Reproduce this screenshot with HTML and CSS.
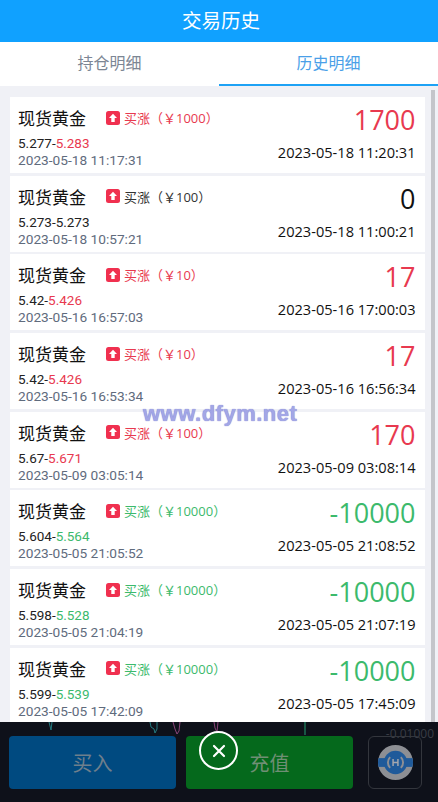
FILE: index.html
```html
<!DOCTYPE html>
<html lang="zh">
<head>
<meta charset="utf-8">
<title>交易历史</title>
<link rel="stylesheet" href="styles.css">
</head>
<body>
<svg class="defs" width="0" height="0"><defs>
<symbol id="up" viewBox="0 0 14 14"><rect width="14" height="14" rx="2.5" fill="#f0304f"/><path d="M7 2.8 11 7H8.7v4H5.3V7H3z" fill="#fff"/></symbol>
<clipPath id="disc"><circle cx="19" cy="19" r="18"/></clipPath>
</defs></svg>
<header class="title">交易历史</header>
<nav class="tabs"><div class="tab">持仓明细</div><div class="tab active">历史明细</div></nav>
<main class="content">
<section class="list">
<article class="card"><div class="left"><div class="head"><span class="name">现货黄金</span><svg class="arrow"><use href="#up"/></svg><span class="type red">买涨（￥1000）</span></div><div class="price">5.277-<span class="red">5.283</span></div><div class="time">2023-05-18 11:17:31</div></div><div class="right"><div class="amount red">1700</div><div class="close">2023-05-18 11:20:31</div></div></article>
<article class="card"><div class="left"><div class="head"><span class="name">现货黄金</span><svg class="arrow"><use href="#up"/></svg><span class="type">买涨（￥100）</span></div><div class="price">5.273-<span>5.273</span></div><div class="time">2023-05-18 10:57:21</div></div><div class="right"><div class="amount">0</div><div class="close">2023-05-18 11:00:21</div></div></article>
<article class="card"><div class="left"><div class="head"><span class="name">现货黄金</span><svg class="arrow"><use href="#up"/></svg><span class="type red">买涨（￥10）</span></div><div class="price">5.42-<span class="red">5.426</span></div><div class="time">2023-05-16 16:57:03</div></div><div class="right"><div class="amount red">17</div><div class="close">2023-05-16 17:00:03</div></div></article>
<article class="card"><div class="left"><div class="head"><span class="name">现货黄金</span><svg class="arrow"><use href="#up"/></svg><span class="type red">买涨（￥10）</span></div><div class="price">5.42-<span class="red">5.426</span></div><div class="time">2023-05-16 16:53:34</div></div><div class="right"><div class="amount red">17</div><div class="close">2023-05-16 16:56:34</div></div></article>
<article class="card"><div class="left"><div class="head"><span class="name">现货黄金</span><svg class="arrow"><use href="#up"/></svg><span class="type red">买涨（￥100）</span></div><div class="price">5.67-<span class="red">5.671</span></div><div class="time">2023-05-09 03:05:14</div></div><div class="right"><div class="amount red">170</div><div class="close">2023-05-09 03:08:14</div></div></article>
<article class="card"><div class="left"><div class="head"><span class="name">现货黄金</span><svg class="arrow"><use href="#up"/></svg><span class="type green">买涨（￥10000）</span></div><div class="price">5.604-<span class="green">5.564</span></div><div class="time">2023-05-05 21:05:52</div></div><div class="right"><div class="amount green">-10000</div><div class="close">2023-05-05 21:08:52</div></div></article>
<article class="card"><div class="left"><div class="head"><span class="name">现货黄金</span><svg class="arrow"><use href="#up"/></svg><span class="type green">买涨（￥10000）</span></div><div class="price">5.598-<span class="green">5.528</span></div><div class="time">2023-05-05 21:04:19</div></div><div class="right"><div class="amount green">-10000</div><div class="close">2023-05-05 21:07:19</div></div></article>
<article class="card"><div class="left"><div class="head"><span class="name">现货黄金</span><svg class="arrow"><use href="#up"/></svg><span class="type green">买涨（￥10000）</span></div><div class="price">5.599-<span class="green">5.539</span></div><div class="time">2023-05-05 17:42:09</div></div><div class="right"><div class="amount green">-10000</div><div class="close">2023-05-05 17:45:09</div></div></article>
</section>
<div class="scrollbar"></div>
</main>
<div class="watermark">www.dfym.net</div>
<footer class="bar">
<svg class="chart" viewBox="0 0 438 20" width="438" height="20" fill="none"><path d="M49 0l2 8 1-8M150 0l1 5 3 2 1 4 2-4 0-7" stroke="#247a80" stroke-width="1"/><path d="M173 0l2 7 2 5 2-3 1-9M214 0l1 6 2 4 1-10" stroke="#8a4478" stroke-width="1"/><path d="M305 0v13" stroke="#1c6f55" stroke-width="1.500"/></svg>
<span class="axis">-0.01000</span>
<div class="actions">
<button class="btn buy">买入</button>
<button class="btn recharge">充值</button>
<div class="logo-box"><svg class="logo" viewBox="0 0 38 38"><circle cx="19" cy="19" r="18" fill="#8d8f94"/><rect y="14.500" width="38" height="9" fill="#1f5a9a" clip-path="url(#disc)"/><circle cx="19" cy="19" r="12" fill="#1f5a9a"/><path d="M13.500 13.500a7.800 7.800 0 0 0 0 11M24.500 13.500a7.800 7.800 0 0 1 0 11" fill="none" stroke="#8d8f94" stroke-width="2"/><path d="M16.500 15.500v7M21.500 15.500v7M16.500 19h5" stroke="#a6a8ae" stroke-width="1.500" fill="none"/></svg></div>
</div>
<div class="close-btn"><svg viewBox="0 0 14 14" width="14" height="14"><path d="M2 2l10 10M12 2 2 12" stroke="#fff" stroke-width="2.200" stroke-linecap="round"/></svg></div>
</footer>
</body>
</html>
```
FILE: styles.css
```css
* { box-sizing: border-box; }
html, body { margin: 0; padding: 0; }
body {
  width: 438px;
  height: 802px;
  overflow: hidden;
  position: relative;
  background: #f0f1f6;
  font-family: "Open Sans", "Noto Sans CJK SC", sans-serif;
  color: #111;
}
.defs { position: absolute; }
.title {
  height: 42px;
  background: #10a1ff;
  color: #fff;
  font-size: 19.500px;
  line-height: 41px;
  text-align: center;
  padding-left: 4px;
}
.tabs { display: flex; height: 44px; background: #fff; }
.tab {
  flex: 1;
  text-align: center;
  font-size: 16px;
  line-height: 42px;
  color: #7c8694;
}
.tab.active { color: #4a9fe8; border-bottom: 2px solid #1ea2f5; }
.content { display: flex; padding: 11px 3px 0 10px; gap: 6px; }
.list { width: 415px; display: flex; flex-direction: column; gap: 2.700px; }
.card {
  height: 76px;
  background: #fff;
  padding: 0 9px 0 8px;
  display: flex;
  justify-content: space-between;
}
.left { padding-top: 8px; }
.head { display: flex; align-items: center; height: 25px; }
.name { font-size: 17px; width: 88px; color: #111; }
.arrow { width: 14px; height: 14px; margin-right: 4px; }
.type { font-size: 13px; color: #333; white-space: nowrap; }
.price { font-family: Roboto, sans-serif; font-size: 13.500px; line-height: 16px; margin-top: 5px; color: #222; }
.time { font-family: Roboto, sans-serif; font-size: 13.700px; line-height: 16px; margin-top: 1px; color: #5f6b7d; }
.right { text-align: right; padding-top: 4px; margin-right: 0.500px; }
.amount { font-size: 27px; line-height: 38px; color: #111; }
.close { font-size: 14.600px; line-height: 18px; margin-top: 4px; color: #111; }
.red { color: #e8394f; }
.green { color: #3cba6c; }
.scrollbar { width: 4px; height: 640px; margin-top: -7px; background: #c4c5ca; }
.watermark {
  position: absolute;
  left: 143px;
  top: 401px;
  font: bold 22px "Liberation Sans", sans-serif;
  letter-spacing: 0.500px;
  color: #a3a6e6;
  text-shadow: 0 0 1px #6b6fc8;
}
.bar {
  position: absolute;
  left: 0;
  right: 0;
  top: 722px;
  height: 80px;
  background: #0e111a;
  padding: 14px 8px 0 9px;
}
.chart { position: absolute; left: 0; top: 0; }
.axis { position: absolute; right: 4px; top: 3px; font-size: 12px; color: #3a3d45; }
.actions { display: flex; position: relative; }
.btn {
  width: 167px;
  height: 53px;
  border: 0;
  border-radius: 4px;
  font: 20px "Open Sans", "Noto Sans CJK SC", sans-serif;
  color: #6e7f8c;
  margin-right: 10px;
  padding-top: 0;
}
.buy { background: #004a80; }
.recharge { background: #05691c; color: #6f8f74; }
.logo-box {
  width: 54px;
  height: 53px;
  margin-left: 5px;
  border: 1px solid #33363d;
  border-radius: 6px;
  display: flex;
  align-items: center;
  justify-content: center;
}
.logo { width: 37px; height: 37px; }
.close-btn {
  position: absolute;
  left: 199px;
  top: 9px;
  width: 39px;
  height: 39px;
  border: 2px solid #fff;
  border-radius: 50%;
  background: #05691c;
  display: flex;
  align-items: center;
  justify-content: center;
}
```
